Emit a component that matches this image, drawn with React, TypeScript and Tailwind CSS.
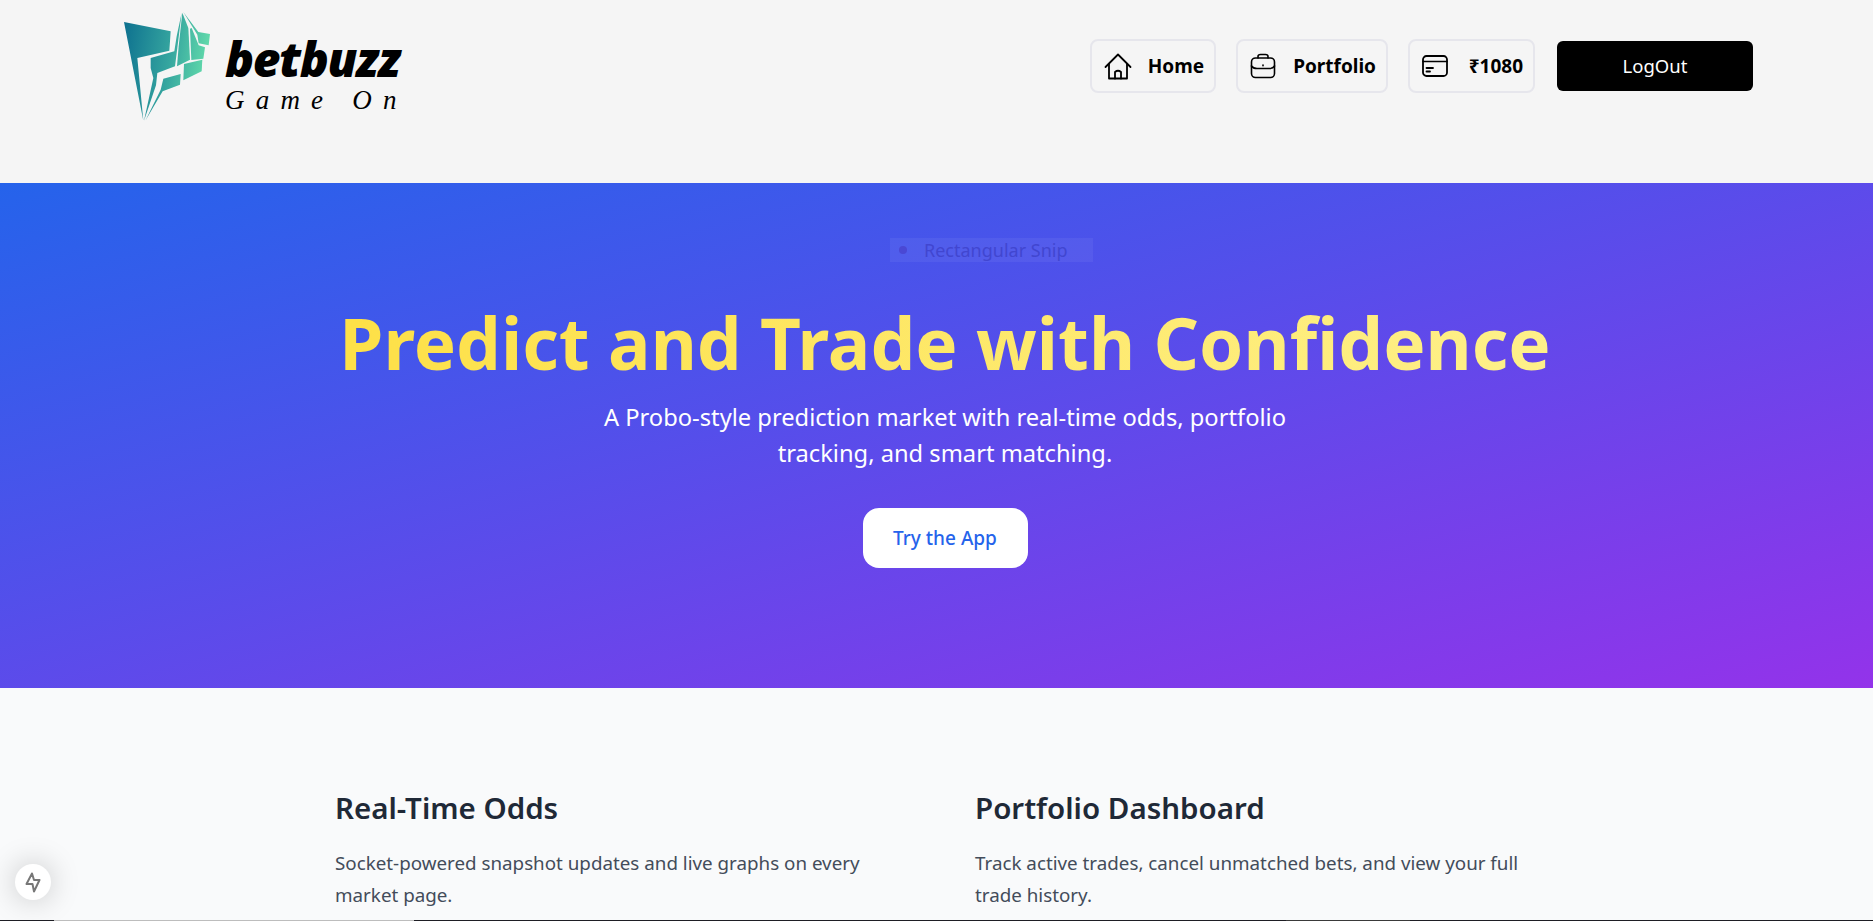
const SANS = "font-['Noto_Sans','Open_Sans',sans-serif]"

const Logo = () => (
    <div className="flex items-start">
        <svg width="95" height="116" viewBox="0 0 285 348">
            <defs>
                <linearGradient id="logoFill" gradientUnits="userSpaceOnUse" x1="12" y1="90" x2="270" y2="130">
                    <stop offset="0" stopColor="#0f7390" />
                    <stop offset="0.55" stopColor="#35a59f" />
                    <stop offset="1" stopColor="#63dcab" />
                </linearGradient>
            </defs>
            <g fill="url(#logoFill)">
                <path d="M12 42 L152 70 L150 100 L148 128 L52 150 L70 338 Z" />
                <path d="M92 150 L163 130 L170 85 L185 14 L172 120 L165 175 L112 195 L108 232 L72 338 L100 210 L92 180 Z" />
                <path d="M187 14 L205 60 L210 155 L171 175 L176 115 Z" />
                <path d="M190 12 L235 72 L270 78 L266 112 L236 106 L232 80 Z" />
                <path d="M215 60 L236 112 L255 118 L250 152 L214 156 L210 62 Z" />
                <path d="M130 212 L182 198 L180 230 L128 250 L76 338 L122 245 Z" />
                <path d="M192 168 L247 155 L245 190 L190 217 Z" />
            </g>
        </svg>
        <div className="mt-[23px] ml-[10px] flex flex-col">
            <span className="font-['Noto_Sans',sans-serif] text-[48px] leading-[56px] font-black tracking-[-1.4px] text-black italic">
                betbuzz
            </span>
            <span className="font-['Liberation_Serif',serif] text-[27px] leading-[26px] tracking-[11.2px] whitespace-nowrap text-black italic">
                Game On
            </span>
        </div>
    </div>
)

const HomeIcon = () => (
    <svg width="28" height="27" viewBox="0 0 28 27" fill="none" stroke="black" strokeWidth="1.8" strokeLinejoin="round" strokeLinecap="round">
        <path d="M1.5 14 L14 1.5 L26.5 14" />
        <path d="M5 11 V25.5 H23 V11" />
        <path d="M11 25.5 V19 Q14 16.5 17 19 V25.5" />
    </svg>
)

const BagIcon = () => (
    <svg width="26" height="26" viewBox="0 0 26 26" fill="none" stroke="black" strokeWidth="1.6" strokeLinejoin="round" strokeLinecap="round">
        <rect x="1.5" y="5" width="23" height="19.5" rx="4" />
        <path d="M8 5 V3.5 Q8 1.5 10.5 1.5 H15.5 Q18 1.5 18 3.5 V5" />
        <path d="M1.5 13 Q3 15.5 7 15.5 H19 Q23 15.5 24.5 13" />
        <path d="M13 12 V12.8" />
    </svg>
)

const CardIcon = () => (
    <svg width="26" height="22" viewBox="0 0 26 22" fill="none" stroke="black" strokeWidth="1.8" strokeLinecap="round">
        <rect x="1" y="1" width="24" height="20" rx="3.5" />
        <path d="M1 6.5 H25" strokeWidth="1.6" />
        <path d="M4.5 13 H11" />
        <path d="M4.5 16.5 H8" />
    </svg>
)

interface NavItemProps {
    icon: React.ReactNode
    label: string
    className: string
}

const NavItem = ({ icon, label, className }: NavItemProps) => (
    <a className={`flex h-[54px] items-center rounded-lg border-2 border-[#e6e6ec] pl-[12px] ${className}`}>
        {icon}
        <span className="ml-auto pr-[10px] text-[19px] font-bold text-black">{label}</span>
    </a>
)

const Feature = ({ title, text }: { title: string; text: string }) => (
    <div className="w-[560px]">
        <h3 className="text-[29.5px] leading-[36px] font-semibold text-[#1f2937]">{title}</h3>
        <p className="mt-[21px] text-[18.8px] leading-[32px] text-[#434c5a]">{text}</p>
    </div>
)

const App = () => {
    return (
        <div className={`relative h-screen overflow-hidden bg-[#f9fafb] ${SANS}`}>
            <header className="flex h-[183px] items-start justify-between bg-[#f5f5f5] pt-[8px] pr-[120px] pl-[120px]">
                <Logo />
                <nav className="mt-[31px] flex items-center gap-[20px]">
                    <NavItem icon={<HomeIcon />} label="Home" className="w-[126px]" />
                    <NavItem icon={<BagIcon />} label="Portfolio" className="w-[152px]" />
                    <NavItem icon={<CardIcon />} label="₹1080" className="w-[127px]" />
                    <button className="ml-[2px] h-[50px] w-[196px] rounded-md bg-black text-[18.5px] text-white">
                        LogOut
                    </button>
                </nav>
            </header>

            <section className="relative flex h-[505px] flex-col items-center bg-linear-to-br/srgb from-[#2563eb] to-[#9333ea] pt-[115px] pl-[17px] text-center">
                <h1 className="bg-linear-to-r/srgb from-[#fde047] to-[#fef08a] bg-clip-text text-[71px] leading-[90px] font-bold text-transparent">
                    Predict and Trade with Confidence
                </h1>
                <p className="mt-[11px] w-[720px] text-[23.7px] leading-[36px] text-white">
                    A Probo-style prediction market with real-time odds, portfolio tracking, and smart matching.
                </p>
                <button className="mt-[37px] h-[60px] w-[165px] rounded-[16px] bg-white text-[19px] font-medium text-[#2563eb]">
                    Try the App
                </button>
                <div className="absolute top-[55px] left-[890px] flex h-[24px] w-[203px] items-center bg-white/5 text-[18px] text-[#4146d0]">
                    <span className="ml-[9px] h-[8px] w-[8px] rounded-full bg-[#4a48d4]" />
                    <span className="ml-[17px] whitespace-nowrap">Rectangular Snip</span>
                </div>
            </section>

            <section className="flex gap-[80px] pt-[102px] pl-[335px]">
                <Feature
                    title="Real-Time Odds"
                    text="Socket-powered snapshot updates and live graphs on every market page."
                />
                <Feature
                    title="Portfolio Dashboard"
                    text="Track active trades, cancel unmatched bets, and view your full trade history."
                />
            </section>

            <div className="absolute bottom-[21px] left-[15px] flex h-[36px] w-[36px] items-center justify-center rounded-full bg-white shadow-[0_0_30px_rgba(0,0,0,0.22)]">
                <svg width="16" height="21" viewBox="0 0 16 21" fill="none" stroke="#777" strokeWidth="2" strokeLinejoin="round">
                    <path d="M7 1.5 L1.5 12 H7.5 L9 19.5 L14.5 8 H9 L7 1.5 Z" />
                </svg>
            </div>

            <div className="absolute right-0 bottom-0 left-0 flex h-[1px] bg-[#1e1e24]">
                <span className="ml-[54px] w-[360px] bg-[#bdbdbd]" />
                <span className="ml-[872px] w-[124px] bg-[#3a3a3a]" />
            </div>
        </div>
    )
}

export default App
